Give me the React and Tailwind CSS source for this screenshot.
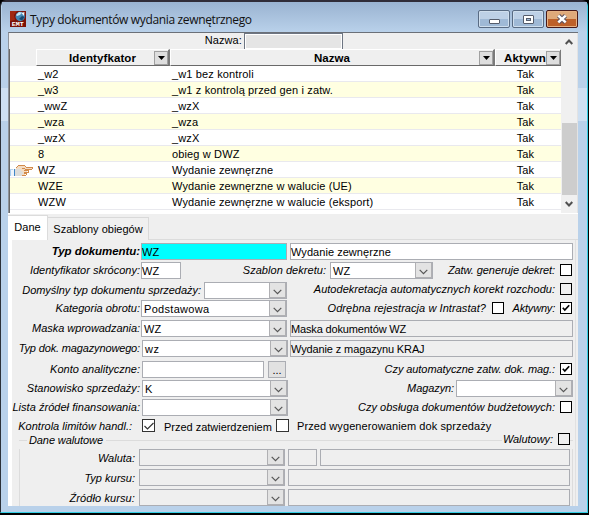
import React, { useState } from 'react';

const rows = [
    { id: '_w2', name: '_w1 bez kontroli' },
    { id: '_w3', name: '_w1 z kontrolą przed gen i zatw.' },
    { id: '_wwZ', name: '_wzX' },
    { id: '_wza', name: '_wza' },
    { id: '_wzX', name: '_wzX' },
    { id: '8', name: 'obieg w DWZ' },
    { id: 'WZ', name: 'Wydanie zewnęrzne' },
    { id: 'WZE', name: 'Wydanie zewnęrzne w walucie (UE)' },
    { id: 'WZW', name: 'Wydanie zewnęrzne w walucie (eksport)' },
];

const Label = ({ className, children }) => (
    <div className={'flex shrink-0 justify-end whitespace-nowrap italic ' + className}>{children}</div>
);

const Field = ({ className, children }) => (
    <div className={'flex h-[17px] shrink-0 items-center whitespace-nowrap border border-[#abadb3] ' + className}>{children}</div>
);

const Combo = ({ className, children }) => (
    <div className={'flex h-[17px] shrink-0 items-center justify-between whitespace-nowrap border border-[#abadb3] ' + className}>
        <span className="pl-0.5">{children}</span>
        <span className="flex h-full w-[17px] items-center justify-center border-l border-r border-b border-[#b0b0b3] bg-[#e3e3e3]">
            <svg width="9" height="6" viewBox="0 0 9 6" className="mt-[3px]" fill="none" stroke="#555" strokeWidth="1.2">
                <path d="M0.7 0.8 L4.5 4.6 L8.3 0.8" />
            </svg>
        </span>
    </div>
);

const Check = ({ className, checked }) => (
    <div className={'flex h-3 w-3 shrink-0 items-center justify-center border border-black ' + className}>
        {checked && (
            <svg width="8" height="8" viewBox="0 0 8 8" fill="none" stroke="#000" strokeWidth="1.7">
                <path d="M0.8 3.8 L2.8 6 L7.2 1.2" />
            </svg>
        )}
    </div>
);

const FilterButton = () => (
    <span className="flex h-3.5 w-3.5 shrink-0 items-center justify-center border border-[#a0a0a0] bg-[#dedede]">
        <svg width="7" height="4" viewBox="0 0 7 4"><path d="M0 0 H7 L3.5 4 Z" /></svg>
    </span>
);

const Header = ({ className, children }) => (
    <div className={'flex h-[17px] items-center border-r-2 border-b border-t border-l border-t-white border-l-white border-r-[#7a7a7a] border-b-[#696969] bg-[#efefef] font-bold ' + className}>
        {children}
        <FilterButton />
    </div>
);

const AppLogo = () => (
    <svg width="16" height="16" viewBox="0 0 16 16">
        <rect width="16" height="16" fill="#7b1208" />
        <path d="M0 0 H7 L4 4 L5 9 L0 10 Z" fill="#a02812" />
        <circle cx="10.2" cy="5.5" r="4.7" fill="#4286b5" />
        <path d="M6 4 L9 1 L12 1.5 L10 4 L7 5 Z" fill="#c3e3f2" />
        <path d="M9 8 L12 5 L14.5 6 L12 9.5 Z" fill="#18476e" />
        <path d="M11.5 2 L14.5 1 L14 5 Z" fill="#f1f8fa" />
        <text x="1.8" y="15" fill="#fff" fontSize="5.5" fontWeight="bold" fontFamily="Liberation Mono, monospace" textLength="12" lengthAdjust="spacingAndGlyphs">EMT</text>
    </svg>
);

const Hand = () => (
    <svg width="24" height="12" viewBox="0 0 24 12" shapeRendering="crispEdges">
        <path d="M0 5 H4 V12 H0" fill="#eef4fb" />
        <path d="M0 5.5 H3" stroke="#b9d3ec" />
        <path d="M4.5 5 V12" stroke="#3f86c8" />
        <path d="M0.5 6 V12" stroke="#a9cdf0" />
        <path d="M5 5 L8 2 L13 1 L16 3 L23 3 L23 5 L17 6 L17 9 L14 11 L10 12 L5 12 Z" fill="#f3dcc3" />
        <path d="M5 5 L10 5 L13 9 L12 12 H5 Z" fill="#dcdcda" />
        <path d="M6 4 L8 2 L11 1 H14 L16 3 H22 L23 4 L22 5 H15 L12 4 M14 6 H18 V8 H14 M14 9 H17 L16 11 H12" fill="none" stroke="#d28a4a" />
    </svg>
);

const TitleBar = () => (
    <div className="flex h-[30px] shrink-0 items-start bg-linear-to-b from-[#9ab3d1] to-[#b9d1ea] pl-2">
        <div className="mt-[9px] h-4 w-4 shrink-0"><AppLogo /></div>
        <div className="mt-[9px] ml-1 whitespace-nowrap font-['Open_Sans',sans-serif] text-[12px] leading-[18px] tracking-[-0.35px] text-[#111]">
            Typy dokumentów wydania zewnętrznego
        </div>
        <div className="mt-2 mr-[9px] ml-auto flex gap-[2px]">
            <button className="flex h-[18px] w-8 items-center justify-center rounded-[2px] border border-[#596b83] bg-linear-to-b from-[#bdd0e6] from-50% to-[#9fb9d6] to-50% shadow-[inset_0_0_0_1px_#cfdeed]">
                <svg width="11" height="5" viewBox="0 0 11 5" className="mt-1"><rect x="0.5" y="0.5" width="10" height="4" rx="0.5" fill="#fff" stroke="#555c6b" /></svg>
            </button>
            <button className="flex h-[18px] w-8 items-center justify-center rounded-[2px] border border-[#596b83] bg-linear-to-b from-[#bdd0e6] from-50% to-[#9fb9d6] to-50% shadow-[inset_0_0_0_1px_#cfdeed]">
                <svg width="11" height="9" viewBox="0 0 11 9"><rect x="0.5" y="0.5" width="10" height="8" rx="0.5" fill="#fff" stroke="#555c6b" /><rect x="3.5" y="3.5" width="4" height="2" fill="#9fb9d6" stroke="#555c6b" /></svg>
            </button>
            <button className="flex h-[18px] w-8 items-center justify-center rounded-[2px] border border-[#481a1a] bg-linear-to-b from-[#dfa97a] from-50% to-[#bd6029] to-50% shadow-[inset_0_0_0_1px_#e6b183]">
                <svg width="12" height="10" viewBox="0 0 12 10" fill="none">
                    <path d="M2.5 1.7 L9.5 8.3 M9.5 1.7 L2.5 8.3" stroke="#5d5360" strokeWidth="4.4" />
                    <path d="M2.3 1.6 L9.7 8.4 M9.7 1.6 L2.3 8.4" stroke="#fff" strokeWidth="2.5" />
                </svg>
            </button>
        </div>
    </div>
);

const Table = ({ selected, onSelect }) => (
    <div className="flex h-[181px] shrink-0 border-t border-l border-t-[#6b7078] border-l-[#8e939b] bg-[#efefef]">
        <div className="flex w-[552px] flex-col">
            <div className="flex h-4 shrink-0 items-start">
                <div className="w-[233px] text-right leading-[15px] tracking-[0.1px]">Nazwa:</div>
                <div className="ml-0.5 h-[17px] w-[99px] border border-[#6d7582] bg-[#e5e5e5] shadow-[inset_0_0_0_1px_#fff]"></div>
            </div>
            <div className="flex h-[17px] shrink-0 border-l border-[#696969] pl-[26px] text-[11.5px]">
                <Header className="w-[134px]"><span className="w-[117px] pl-8 tracking-[0.1px]">Identyfkator</span></Header>
                <Header className="w-[325px]"><span className="w-[308px] pl-[143px]">Nazwa</span></Header>
                <Header className="w-[67px]"><span className="w-[50px] overflow-hidden pl-2 tracking-[0.2px]">Aktywn</span></Header>
            </div>
            <div className="flex flex-col border-l border-[#696969]">
                {rows.map((row) => (
                    <div key={row.id} onClick={() => onSelect(row.id)} className="flex h-4 shrink-0 items-center border-b border-[#e9e9ee] bg-white whitespace-nowrap tracking-[0.14px] even:bg-[#ffffe1]">
                        <div className="w-7 shrink-0">{row.id === selected && <Hand />}</div>
                        <div className="w-[134px] shrink-0">{row.id}</div>
                        <div className="w-[338px] shrink-0">{row.name}</div>
                        <div className="w-[31px] text-center">Tak</div>
                    </div>
                ))}
                <div className="h-[3px] bg-white"></div>
            </div>
        </div>
        <div className="flex w-4 shrink-0 flex-col items-center bg-[#f0f0f0]">
            <svg width="8" height="6" viewBox="0 0 8 6" className="mt-[6px]" fill="none" stroke="#505050" strokeWidth="2"><path d="M0.7 5 L4 1.5 L7.3 5" /></svg>
            <div className="mt-[78px] h-[72px] w-[15px] bg-[#cdcdcd]"></div>
            <svg width="8" height="6" viewBox="0 0 8 6" className="mt-[6px]" fill="none" stroke="#505050" strokeWidth="2"><path d="M0.7 1 L4 4.5 L7.3 1" /></svg>
        </div>
        <div className="w-[2px] border-l border-[#e3e3e3] bg-white"></div>
    </div>
);

const App = () => {
    const [selected, setSelected] = useState('WZ');

    return (
        <div className="h-[515px] w-[589px] overflow-hidden bg-black font-['Liberation_Sans',Arial,sans-serif] text-[11px] leading-[14px] text-black">
            <div className="flex h-[513px] w-[588px] flex-col rounded-t-md border border-t-2 border-t-[#302c38] border-r-[#33cfe5] border-b-[#33cfe5] border-l-[#2b3038] bg-[linear-gradient(#b9d1ea_86px,#cfe0f2_86px,#cfe0f2_119px,#b9d1ea_119px)] pl-px">
                <TitleBar />
                <div className="ml-[6px] flex h-[474px] w-[570px] flex-col bg-[#efefef]">
                    <Table selected={selected} onSelect={setSelected} />
                    <div className="flex h-[27px] shrink-0 items-end border-t border-white">
                        <div className="flex h-[25px] w-10 items-center justify-center border-t border-r border-[#dcdcdc] bg-white pb-0.5">Dane</div>
                        <div className="flex h-[23px] w-[101px] items-center justify-center border-t border-r border-[#d9d9d9] bg-[#f0f0f0] pb-px">Szablony obiegów</div>
                        <div className="h-px flex-1 bg-[#dcdcdc]"></div>
                    </div>
                    <div className="flex min-h-0 flex-1 border-l-4 border-white">
                        <div className="flex w-[564px] shrink-0 flex-col overflow-hidden border-r border-[#e1e1e1] pt-[3px]">
                            <div className="flex h-[19px] shrink-0 items-start">
                                <Label className="mt-px w-32 text-[11.5px] font-bold tracking-[-0.05px]">Typ dokumentu:</Label>
                                <Field className="ml-px w-[146px] bg-[#00ffff]">WZ</Field>
                                <Field className="ml-[3px] w-[283px] bg-white tracking-[0.05px]">Wydanie zewnęrzne</Field>
                            </div>
                            <div className="flex h-[20px] shrink-0 items-start">
                                <Label className="mt-px w-32">Identyfikator skrócony:</Label>
                                <Field className="ml-px w-10 bg-white">WZ</Field>
                                <Label className="mt-px w-[145px] tracking-[0.04px]">Szablon dekretu:</Label>
                                <Combo className="ml-1 w-[103px] bg-white">WZ</Combo>
                                <Label className="mt-px w-[122px] tracking-[-0.08px]">Zatw. generuje dekret:</Label>
                                <Check className="mt-[2px] ml-[5px] bg-white" />
                            </div>
                            <div className="flex h-[18px] shrink-0 items-start">
                                <Label className="mt-px w-[189px] tracking-[-0.03px]">Domyślny typ dokumentu sprzedaży:</Label>
                                <Combo className="ml-[3px] w-[83px] bg-white"></Combo>
                                <Label className="w-[268px] tracking-[0.02px]">Autodekretacja automatycznych korekt rozchodu:</Label>
                                <Check className="mt-px ml-[5px]" />
                            </div>
                            <div className="flex h-[20px] shrink-0 items-start">
                                <Label className="mt-px w-32">Kategoria obrotu:</Label>
                                <Combo className="ml-px w-[146px] bg-white tracking-[0.3px]">Podstawowa</Combo>
                                <Label className="mt-px w-[199px] tracking-[0.06px]">Odrębna rejestracja w Intrastat?</Label>
                                <Check className="mt-[2px] ml-[6px] bg-white" />
                                <Label className="mt-px w-[51px] tracking-[-0.2px]">Aktywny:</Label>
                                <Check className="mt-[2px] ml-[5px] bg-white" checked />
                            </div>
                            <div className="flex h-[20px] shrink-0 items-start">
                                <Label className="mt-px w-32 tracking-[-0.05px]">Maska wprowadzania:</Label>
                                <Combo className="ml-px w-[146px] bg-white">WZ</Combo>
                                <Field className="ml-[3px] w-[283px] tracking-[-0.15px]">Maska dokumentów WZ</Field>
                            </div>
                            <div className="flex h-[21px] shrink-0 items-start">
                                <Label className="mt-px w-32 tracking-[-0.15px]">Typ dok. magazynowego:</Label>
                                <Combo className="ml-[2px] w-[146px] bg-white tracking-[0.5px]">wz</Combo>
                                <Field className="ml-[2px] w-[283px] tracking-[-0.12px]">Wydanie z magazynu KRAJ</Field>
                            </div>
                            <div className="flex h-[19px] shrink-0 items-start">
                                <Label className="mt-px w-32">Konto analityczne:</Label>
                                <Field className="ml-[2px] w-[122px] bg-white"></Field>
                                <div className="ml-1 flex h-[17px] w-[18px] items-center justify-center border border-[#abadb3] bg-[#e1e1e1]">...</div>
                                <Label className="mt-px w-[269px] tracking-[-0.08px]">Czy automatyczne zatw. dok. mag.:</Label>
                                <Check className="mt-[2px] ml-[5px] bg-white" checked />
                            </div>
                            <div className="flex h-[19px] shrink-0 items-start">
                                <Label className="mt-px w-32 tracking-[0.03px]">Stanowisko sprzedaży:</Label>
                                <Combo className="ml-[2px] w-[146px] bg-white">K</Combo>
                                <Label className="mt-px w-[166px] tracking-[-0.1px]">Magazyn:</Label>
                                <Combo className="ml-[2px] w-[117px] bg-white"></Combo>
                            </div>
                            <div className="flex h-[20px] shrink-0 items-start">
                                <Label className="mt-px w-32 tracking-[0.04px]">Lista źródeł finansowania:</Label>
                                <Combo className="ml-[2px] w-[146px] bg-white"></Combo>
                                <Label className="mt-px w-[267px] tracking-[0.02px]">Czy obsługa dokumentów budżetowych:</Label>
                                <Check className="mt-[2px] ml-[5px] bg-white" />
                            </div>
                            <div className="flex h-[14px] shrink-0 items-start whitespace-nowrap">
                                <Label className="w-[120px]">Kontrola limitów handl.:</Label>
                                <div className="ml-[10px] flex h-[13px] w-[13px] shrink-0 items-center justify-center border border-[#333] bg-white">
                                    <svg width="10" height="8" viewBox="0 0 10 8" fill="none" stroke="#333" strokeWidth="1.2"><path d="M0.5 4 L3.5 7 L9.5 1" /></svg>
                                </div>
                                <span className="mt-px ml-[9px] w-[112px] tracking-[-0.02px]">Przed zatwierdzeniem</span>
                                <div className="h-[13px] w-[13px] shrink-0 border border-[#333] bg-white"></div>
                                <span className="ml-2 tracking-[0.09px]">Przed wygenerowaniem dok sprzedaży</span>
                            </div>
                            <div className="flex h-[16px] shrink-0 items-center pl-[7px]">
                                <div className="mt-[-2px] h-px w-[8px] bg-[#dcdcdc]"></div>
                                <span className="mt-[-2px] w-[79px] pl-[2px] whitespace-nowrap italic tracking-[-0.1px]">Dane walutowe</span>
                                <div className="mt-[-2px] h-px w-[396px] bg-[#dcdcdc]"></div>
                                <Label className="mt-[-4px] w-[51px] tracking-[-0.05px]">Walutowy:</Label>
                                <Check className="mt-[-4px] ml-[5px]" />
                                <div className="mt-[-2px] h-px w-[3px] bg-[#dcdcdc]"></div>
                            </div>
                            <div className="ml-[7px] flex w-[554px] flex-1 flex-col gap-[3px] border-x border-[#dcdcdc]">
                                <div className="flex h-[17px] shrink-0 items-start">
                                    <Label className="mt-[2px] w-[115px]">Waluta:</Label>
                                    <Combo className="ml-1 w-[146px]"></Combo>
                                    <Field className="ml-[3px] w-[29px]"></Field>
                                    <Field className="ml-[3px] w-[250px]"></Field>
                                </div>
                                <div className="flex h-[17px] shrink-0 items-start">
                                    <Label className="mt-[2px] w-[115px]">Typ kursu:</Label>
                                    <Combo className="ml-1 w-[146px]"></Combo>
                                    <Field className="ml-[3px] w-[282px]"></Field>
                                </div>
                                <div className="flex h-[17px] shrink-0 items-start">
                                    <Label className="mt-[2px] w-[115px] tracking-[0.1px]">Źródło kursu:</Label>
                                    <Combo className="ml-1 w-[146px]"></Combo>
                                    <Field className="ml-[3px] w-[282px]"></Field>
                                </div>
                            </div>
                        </div>
                    </div>
                </div>
            </div>
        </div>
    );
};

export default App;
